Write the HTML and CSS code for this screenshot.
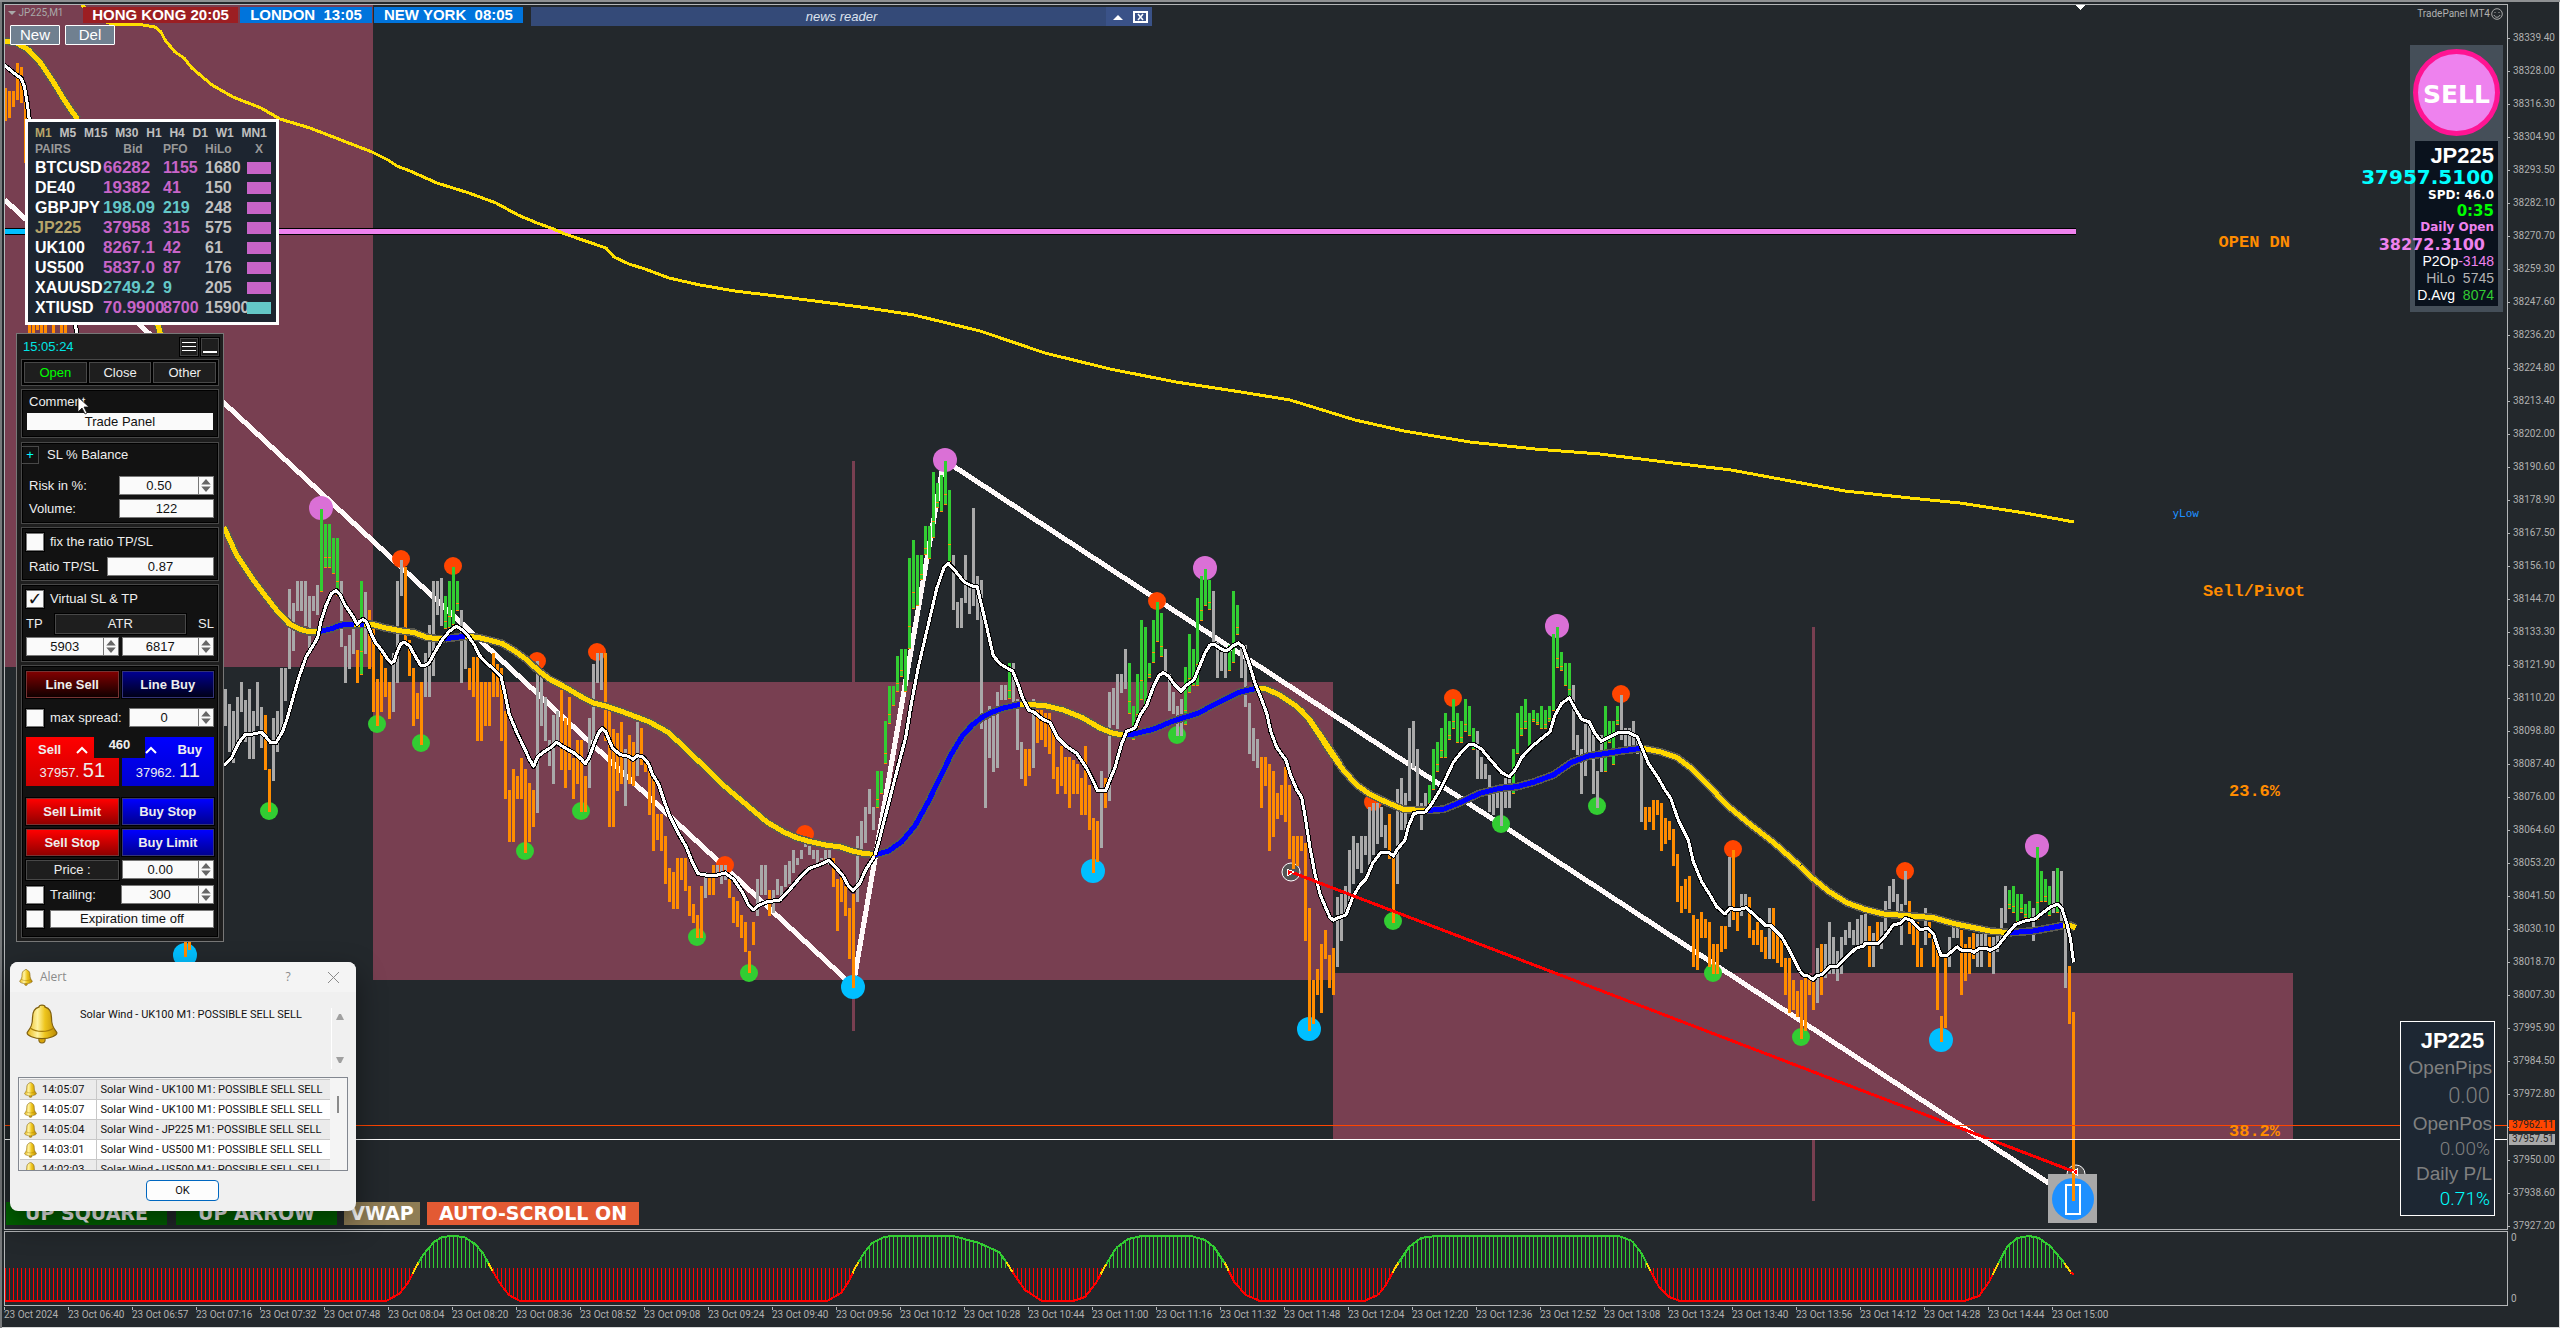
FILE: index.html
```html
<!DOCTYPE html>
<html lang="en">
<head>
<meta charset="utf-8">
<title>JP225,M1</title>
<link rel="stylesheet" href="styles.css">
</head>
<body>
<svg class="defs" aria-hidden="true">
  <defs>
    <linearGradient id="gold" x1="0" x2="1"><stop offset="0" stop-color="#e9b91a"/><stop offset=".35" stop-color="#fff3a0"/><stop offset=".6" stop-color="#eec51c"/><stop offset="1" stop-color="#b98a06"/></linearGradient>
    <symbol id="bell" viewBox="0 0 30 38">
      <circle cx="15" cy="34" r="3" fill="#d9a60c" stroke="#80600e"/>
      <path d="M15 1c2 0 3 1 3 2 4 1 6 5 6 10 0 6 1 9 5 14 1 3-7 6-14 6S0 30 1 27c4-5 5-8 5-14 0-5 2-9 6-10 0-1 1-2 3-2z" fill="url(#gold)" stroke="#80600e" stroke-width="1.2"/>
      <path d="M4 23c6 4 16 4 22 0" fill="none" stroke="#a67c0a"/>
    </symbol>
    <symbol id="spin" viewBox="0 0 14 18"><path d="M2 8l5-6 5 6zM2 10l5 6 5-6z" fill="#666"/></symbol>
  </defs>
</svg>

<main class="terminal">
  <section class="chart" aria-label="Price chart">
    <svg id="price" class="plot" viewBox="5 5 2502 1224" preserveAspectRatio="none"></svg>
  </section>
  <ol class="prices" id="prices"></ol>
  <section class="indicator" aria-label="Trend indicator">
    <svg id="wave" class="plot" viewBox="5 1232 2502 73" preserveAspectRatio="none"></svg>
  </section>
  <div class="zeros"><span>0</span><span>0</span></div>
  <ol class="times" id="times"></ol>
</main>

<span class="tag tag-ask">37962.11</span>
<span class="tag tag-bid">37957.51</span>

<span class="level open-dn">OPEN DN</span>
<span class="level pivot">Sell/Pivot</span>
<span class="level fib-23">23.6%</span>
<span class="level fib-38">38.2%</span>
<span class="ylow">yLow</span>

<header class="topbar">
  <span class="symbol"><svg width="8" height="6" viewBox="0 0 8 6"><path d="M0 1h8l-4 4z" fill="#a9a9a9"/></svg> JP225,M1</span>
  <div class="sessions">
    <span class="session closed">HONG KONG 20:05</span>
    <span class="session">LONDON  13:05</span>
    <span class="session">NEW YORK  08:05</span>
  </div>
  <div class="news"><em>news reader</em>
    <button class="news-btn" aria-label="Collapse"><svg width="12" height="6" viewBox="0 0 12 6"><path d="M1 6l5-5 5 5z" fill="#fff"/></svg></button>
    <button class="news-btn" aria-label="Close"><svg width="15" height="12" viewBox="0 0 15 12"><path d="M1 1h13v10H1z" fill="none" stroke="#fff" stroke-width="2"/><path d="M5 3l5 6M10 3l-5 6" stroke="#fff" stroke-width="1.5"/></svg></button>
  </div>
</header>
<div class="line-tools"><button>New</button><button>Del</button></div>
<div class="expert">TradePanel MT4<svg width="12" height="12" viewBox="0 0 12 12"><circle cx="6" cy="6" r="5.300" fill="none" stroke="#a9a9a9"/><path d="M4 4v1M8 4v1M3 7c1 3 5 3 6 0" fill="none" stroke="#a9a9a9"/></svg></div>

<section class="pairs" aria-label="Pairs">
  <nav class="frames"><button class="on">M1</button><button>M5</button><button>M15</button><button>M30</button><button>H1</button><button>H4</button><button>D1</button><button>W1</button><button>MN1</button></nav>
  <table>
    <thead><tr><th>PAIRS</th><th class="mid">Bid</th><th>PFO</th><th>HiLo</th><th class="mid">X</th></tr></thead>
    <tbody>
      <tr><th>BTCUSD</th><td>66282</td><td>1155</td><td>1680</td><td><i></i></td></tr>
      <tr><th>DE40</th><td>19382</td><td>41</td><td>150</td><td><i></i></td></tr>
      <tr class="up"><th>GBPJPY</th><td>198.09</td><td>219</td><td>248</td><td><i></i></td></tr>
      <tr class="current"><th>JP225</th><td>37958</td><td>315</td><td>575</td><td><i></i></td></tr>
      <tr><th>UK100</th><td>8267.1</td><td>42</td><td>61</td><td><i></i></td></tr>
      <tr><th>US500</th><td>5837.0</td><td>87</td><td>176</td><td><i></i></td></tr>
      <tr class="up"><th>XAUUSD</th><td>2749.2</td><td>9</td><td>205</td><td><i></i></td></tr>
      <tr><th>XTIUSD</th><td>70.9900</td><td>8700</td><td>15900</td><td><i class="teal"></i></td></tr>
    </tbody>
  </table>
</section>

<form class="panel">
  <div class="panel-head"><time>15:05:24</time>
    <button type="button" aria-label="Menu"><svg width="14" height="12" viewBox="0 0 14 12"><path d="M0 1h14v1H0zM0 5h14v1H0zM0 9h14v1H0z" fill="#fff"/></svg></button>
    <button type="button" aria-label="Minimise"><svg width="14" height="12" viewBox="0 0 14 12"><path d="M0 11h14" stroke="#fff" stroke-width="2"/></svg></button>
  </div>
  <div class="group tabs"><button type="button" class="on">Open</button><button type="button">Close</button><button type="button">Other</button></div>
  <div class="group comment"><label for="comment">Comment</label><input id="comment" value="Trade Panel"></div>
  <div class="group balance">
    <div class="line title"><button type="button" class="plus">+</button>SL % Balance</div>
    <div class="line"><label for="risk">Risk in %:</label><span class="spin w95"><input id="risk" value="0.50"><svg><use href="#spin"/></svg></span></div>
    <div class="line"><label for="volume">Volume:</label><span class="spin w95"><input id="volume" value="122"></span></div>
  </div>
  <div class="group ratio">
    <div class="line tick"><input type="checkbox" id="fix"><label for="fix">fix the ratio TP/SL</label></div>
    <div class="line"><label for="ratio">Ratio TP/SL</label><span class="spin w107"><input id="ratio" value="0.87"></span></div>
  </div>
  <div class="group virtual">
    <div class="line tick"><input type="checkbox" id="virt" checked><label for="virt">Virtual SL &amp; TP</label></div>
    <div class="line atr"><label for="tp">TP</label><button type="button" class="dark">ATR</button><label for="sl">SL</label></div>
    <div class="pair"><span class="spin"><input id="tp" value="5903"><svg><use href="#spin"/></svg></span><span class="spin"><input id="sl" value="6817"><svg><use href="#spin"/></svg></span></div>
  </div>
  <div class="group orders">
    <div class="pair"><button type="button" class="btn dsell">Line Sell</button><button type="button" class="btn dbuy">Line Buy</button></div>
    <div class="line tick"><input type="checkbox" id="maxs"><label for="maxs">max spread:</label><span class="spin w85"><input value="0" aria-label="Max spread"><svg><use href="#spin"/></svg></span></div>
    <div class="pair quote">
      <button type="button" class="deal sell"><span class="deal-top"><b>Sell</b><svg width="12" height="8" viewBox="0 0 12 8"><path d="M1 7l5-5 5 5" fill="none" stroke="#fff" stroke-width="2"/></svg></span><span>37957. <big>51</big></span></button>
      <button type="button" class="deal buy"><span class="deal-top"><svg width="12" height="8" viewBox="0 0 12 8"><path d="M1 7l5-5 5 5" fill="none" stroke="#fff" stroke-width="2"/></svg><b>Buy</b></span><span>37962. <big>11</big></span></button>
      <output class="spread">460</output>
    </div>
    <div class="pair"><button type="button" class="btn rsell">Sell Limit</button><button type="button" class="btn rbuy">Buy Stop</button></div>
    <div class="pair"><button type="button" class="btn rsell">Sell Stop</button><button type="button" class="btn rbuy">Buy Limit</button></div>
    <div class="pair"><button type="button" class="dark">Price :</button><span class="spin"><input value="0.00" aria-label="Price"><svg><use href="#spin"/></svg></span></div>
    <div class="line tick"><input type="checkbox" id="trail"><label for="trail">Trailing:</label><span class="spin w93"><input value="300" aria-label="Trailing"><svg><use href="#spin"/></svg></span></div>
    <div class="line tick"><input type="checkbox" aria-label="Expiration"><span class="spin grow"><input value="Expiration time off" aria-label="Expiration time"></span></div>
  </div>
</form>
<svg class="cursor" viewBox="0 0 12 19"><path d="M1 1v15l4-4 3 6 2-1-3-6h5z" fill="#fff" stroke="#111" stroke-width=".8"/></svg>

<div class="scripts"><button class="green">UP SQUARE</button><button class="green">UP ARROW</button><button class="vwap">VWAP</button><button class="auto">AUTO-SCROLL ON</button></div>

<section class="alert" role="dialog" aria-label="Alert">
  <header><svg class="bell-s"><use href="#bell"/></svg><span>Alert</span><button aria-label="Help">?</button><button aria-label="Close"><svg width="11" height="11" viewBox="0 0 11 11"><path d="M0 0l11 11M11 0L0 11" stroke="#8a8a8a"/></svg></button></header>
  <div class="alert-now"><svg class="bell-l"><use href="#bell"/></svg><p>Solar Wind - UK100 M1: POSSIBLE SELL SELL</p>
    <div class="scroll"><svg width="8" height="7" viewBox="0 0 8 7"><path d="M0 7l3-6h2l3 6z" fill="#a0a0a0"/></svg><svg width="8" height="7" viewBox="0 0 8 7"><path d="M0 0l3 6h2l3-6z" fill="#a0a0a0"/></svg></div></div>
  <div class="alert-list">
    <table>
      <tbody>
        <tr><td><svg class="bell-s"><use href="#bell"/></svg>14:05:07</td><td>Solar Wind - UK100 M1: POSSIBLE SELL SELL</td></tr>
        <tr><td><svg class="bell-s"><use href="#bell"/></svg>14:05:07</td><td>Solar Wind - UK100 M1: POSSIBLE SELL SELL</td></tr>
        <tr><td><svg class="bell-s"><use href="#bell"/></svg>14:05:04</td><td>Solar Wind - JP225 M1: POSSIBLE SELL SELL</td></tr>
        <tr><td><svg class="bell-s"><use href="#bell"/></svg>14:03:01</td><td>Solar Wind - US500 M1: POSSIBLE SELL SELL</td></tr>
        <tr><td><svg class="bell-s"><use href="#bell"/></svg>14:02:03</td><td>Solar Wind - US500 M1: POSSIBLE SELL SELL</td></tr>
      </tbody>
    </table>
    <span class="thumb"></span>
  </div>
  <button class="ok">OK</button>
</section>

<aside class="signal">
  <div class="bulb">SELL</div>
  <div class="stats">
    <strong class="name">JP225</strong>
    <span class="bid">37957.5100</span>
    <span class="spd">SPD: 46.0</span>
    <span class="clock">0:35</span>
    <span class="daily">Daily Open</span>
    <span class="daily-val">38272.3100</span>
    <span class="stat">P2Op<b class="pink">-3148</b></span>
    <span class="stat grey">HiLo  <b>5745</b></span>
    <span class="stat">D.Avg  <b class="lime">8074</b></span>
  </div>
</aside>

<aside class="open-box">
  <strong class="name">JP225</strong>
  <span>OpenPips</span><span class="led big">0.00</span>
  <span>OpenPos</span><span class="led">0.00%</span>
  <span>Daily P/L</span><span class="led cyan">0.71%</span>
</aside>
<script src="chart.js"></script>
</body>
</html>
```
FILE: styles.css
```css
* { box-sizing: border-box; }
body { margin: 0; position: relative; min-height: 100vh; background: #23282c; color: #fff; font: 13px/16px "Liberation Sans", Arial, sans-serif; overflow: hidden; }
button, input { font: inherit; color: inherit; margin: 0; padding: 0; border: 0; }
button { background: none; cursor: pointer; white-space: nowrap; }
ol { list-style: none; margin: 0; padding: 0; }
.defs { position: absolute; width: 0; height: 0; }

/* chart frame */
.terminal { display: grid; grid-template-columns: minmax(0, 1fr) 50px; grid-template-rows: minmax(0, 1fr) 75px 20px; row-gap: 1px; height: 100vh; padding: 4px 2px 1px 4px; box-shadow: inset 0 2px #8f9193, inset 2px 0 #77797b, inset -1px -1px #d8d8d8; }
.chart, .indicator { border: 1px solid #b4b6b8; min-height: 0; }
.plot { display: block; width: 100%; height: 100%; shape-rendering: crispEdges; }
.prices, .times, .zeros, .tag { font: 10px/10px Roboto, sans-serif; color: #b0b0b0; }
.prices { padding-top: 17px; overflow: hidden; }
.prices li { height: 33px; line-height: 33px; padding-left: 5px; background: linear-gradient(#b4b6b8, #b4b6b8) 0 17px / 2px 1px no-repeat; }
.times { grid-column: 1 / 3; display: flex; }
.times li { flex: 0 0 64px; padding-top: 3px; background: linear-gradient(#b4b6b8, #b4b6b8) 0 0 / 1px 3px no-repeat; white-space: nowrap; }
.zeros { display: flex; flex-direction: column; justify-content: space-between; padding: 2px 3px; }
.tag { position: absolute; right: 5px; width: 46px; padding-left: 3px; height: 11px; color: #222; }
.tag-ask { top: 1120px; background: #ff4500; }
.tag-bid { top: 1134px; background: #a9a9a9; }

/* labels on the chart */
.level { position: absolute; font: bold 17px/20px "Liberation Mono", monospace; color: #ff8c00; }
.open-dn { top: 233px; right: 270px; }
.pivot { top: 582px; right: 255px; }
.fib-23 { top: 782px; right: 280px; }
.fib-38 { top: 1122px; right: 280px; }
.ylow { position: absolute; top: 506px; right: 361px; font: 11px/16px "DejaVu Sans Mono", monospace; color: #1e90ff; }

/* top strip */
.topbar { position: absolute; left: 8px; top: 7px; display: flex; font-weight: bold; white-space: pre; }
.symbol { width: 75px; font: 10px/12px Roboto, sans-serif; color: #a9a9a9; }
.sessions { display: flex; gap: 2px; font-size: 15px; height: 16px; }
.session { background: #0074dc; width: 149px; text-align: center; }
.session.closed { background: #9c1e22; width: 155px; }
.session:nth-child(2) { width: 132px; }
.news { display: flex; margin-left: 8px; width: 621px; height: 19px; line-height: 19px; background: #344a78; align-items: stretch; }
.news em { flex: 1; text-align: center; font-weight: normal; font-size: 13px; color: #dce2ee; padding-left: 46px; }
.news-btn { width: 23px; background: #3a5288; display: grid; place-items: center; }
.line-tools { position: absolute; left: 10px; top: 25px; display: flex; gap: 5px; }
.line-tools button { width: 50px; height: 20px; background: #708090; border: 1px solid #fff; border-radius: 1px; font-size: 15px; line-height: 18px; }
.expert { position: absolute; right: 57px; top: 8px; display: flex; gap: 1px; font: 10px/12px Roboto, sans-serif; color: #b0b0b0; }

/* pairs table */
.pairs { position: absolute; left: 25px; top: 119px; width: 254px; height: 206px; padding: 3px 7px; border: 3px solid #fff; background: #1d2530; font-family: Impact, "Liberation Sans Narrow", "Liberation Sans", sans-serif; font-weight: bold; }
.frames { display: flex; justify-content: space-between; padding-right: 2px; height: 15px; font-size: 12px; color: #c0c0c0; }
.frames .on { color: #b8a56a; }
.pairs table { border-collapse: collapse; table-layout: fixed; width: 234px; }
.pairs th, .pairs td { padding: 0; height: 20px; text-align: left; white-space: nowrap; font-weight: bold; font-size: 16px; line-height: 20px; width: 42px; color: #c864c8; }
.pairs th:first-child { width: 68px; color: #fff; }
.pairs th:nth-child(2) { width: 60px; }
.pairs td:nth-child(2) { font-size: 17px; }
.pairs th:last-child { width: 24px; }
.pairs thead th, .pairs thead th:first-child { height: 18px; font-size: 12px; color: #999; line-height: 18px; }
.pairs thead .mid { text-align: center; }
.pairs td:nth-child(4) { color: #c0c0c0; }
.pairs .up td:nth-child(2), .pairs .up td:nth-child(3) { color: #64c8c8; }
.pairs .current th:first-child { color: #b8a56a; }
.pairs i { display: block; position: relative; width: 24px; height: 12px; background: #c864c8; }
.pairs i.teal { background: #64c8c8; }

/* trade panel */
.panel { position: absolute; left: 16px; top: 333px; width: 208px; height: 609px; padding: 3px 4px; border: 1px solid #777; background: #1e1e1e; display: flex; flex-direction: column; gap: 3px; color: #eee; }
.panel-head { display: flex; align-items: center; gap: 2px; height: 19px; color: #00e5e5; }
.panel-head time { flex: 1; padding-left: 2px; }
.panel-head button { width: 18px; height: 18px; border: 1px solid #444; outline: 1px solid #000; display: grid; place-items: center; margin-left: 1px; }
.group { border: 1px solid #484848; background: #121212; box-shadow: inset 0 0 0 1px #000; padding: 4px; display: flex; flex-direction: column; gap: 4px; }
.tabs { flex-direction: row; height: 27px; padding: 2px; gap: 2px; background: #000; }
.tabs button { flex: 1; background: #1e1e1e; border: 1px solid #484848; }
.tabs .on { color: #0f0; }
.comment { height: 49px; gap: 3px; }
.comment label { padding-left: 3px; }
.comment input, .spin input { background: #fafafa; color: #111; text-align: center; min-width: 0; }
.comment input { height: 17px; margin: 0 1px; }
.balance { height: 82px; margin-top: 1px; padding-top: 2px; }
.ratio { height: 54px; }
.virtual { height: 78px; }
.line { display: flex; align-items: center; justify-content: space-between; padding-left: 3px; height: 19px; }
.title { justify-content: flex-start; gap: 8px; padding: 0; margin: 0 0 8px -5px; }
.plus { width: 18px; height: 18px; border: 1px solid #484848; color: #0ff; }
.tick { justify-content: flex-start; gap: 6px; padding: 0; }
.tick input[type=checkbox] { appearance: none; width: 18px; height: 18px; background: #fafafa; border: 1px solid #777; outline: 1px solid #000; flex: none; }
.tick input:checked { display: grid; place-items: center; }
.tick input:checked::before { content: "✓"; color: #111; font: bold 18px/16px "DejaVu Sans", sans-serif; }
.spin { display: flex; height: 19px; border: 1px solid #777; background: #fafafa; }
.spin input { flex: 1; width: 10px; background: none; }
.spin svg { width: 15px; height: 17px; border-left: 1px solid #777; flex: none; }
.w95 { width: 95px; }
.w107 { width: 107px; }
.w85 { width: 85px; margin-left: auto; }
.w93 { width: 93px; margin-left: auto; }
.grow { flex: 1; height: 18px; }
.ratio .line + .line, .virtual .line + .line { margin-top: 2px; }
.atr { gap: 12px; padding: 0; }
.dark { flex: 1; height: 20px; background: #1e1e1e; border: 1px solid #484848; outline: 1px solid #000; }
.pair { display: flex; gap: 3px; position: relative; }
.pair > * { flex: 1 1 0; min-width: 0; }
.orders { flex: 1; padding-top: 5px; }
.btn { height: 27px; font-weight: bold; border: 1px solid #334; outline: 1px solid #000; }
.dsell { background: linear-gradient(#800000, #100000); border-color: #733; }
.dbuy { background: linear-gradient(#000090, #000018); border-color: #337; }
.rsell { background: linear-gradient(#ff0000, #900000); border-color: #733; }
.rbuy { background: linear-gradient(#0000ff, #000090); border-color: #337; }
.orders .tick { margin-top: 1px; }
.orders .pair:first-child + .tick { margin-top: 6px; }
.quote { margin: 6px 0 8px; height: 49px; }
.deal { display: flex; flex-direction: column; align-items: center; justify-content: space-between; padding: 5px 4px 2px; }
.deal-top { display: flex; gap: 15px; align-items: center; align-self: flex-start; padding-left: 8px; height: 16px; }
.buy .deal-top { align-self: flex-end; padding: 0 8px 0 0; gap: 20px; }
.deal big { font-size: 20px; }
.deal > span + span { line-height: 24px; }
.sell { background: linear-gradient(#ff0000, #d00000); }
.buy { background: linear-gradient(#0000ff, #0000d0); }
.spread { position: absolute; left: 68px; top: 0; width: 51px; height: 21px; background: #121212; text-align: center; font-weight: bold; }
.cursor { position: absolute; left: 77px; top: 396px; width: 12px; height: 19px; }

/* script buttons */
.scripts { position: absolute; left: 6px; bottom: 103px; display: flex; font: bold 19px/23px "DejaVu Sans", sans-serif; }
.scripts button { height: 23px; }
.green { width: 161px; margin-right: 9px; background: #006400; }
.vwap { width: 76px; background: #8f7d55; margin: 0 7px 0 -2px; }
.auto { width: 212px; background: #e35a33; }

/* alert */
.alert { position: absolute; left: 10px; bottom: 117px; width: 346px; height: 249px; border-radius: 8px; background: #f0f0f0; color: #111; font: 11px/14px Roboto, sans-serif; box-shadow: 0 12px 30px rgba(0, 0, 0, .45); overflow: hidden; display: flex; flex-direction: column; }
.alert header { display: flex; align-items: center; height: 30px; background: #f4f4f4; color: #8a8a8a; font: 12px/16px "Open Sans", sans-serif; padding: 0 4px 0 9px; gap: 7px; }
.alert header span { flex: 1; }
.alert header button { width: 38px; height: 28px; display: grid; place-items: center; }
.bell-s { width: 14px; height: 17px; }
.bell-l { width: 40px; height: 40px; }
.alert-now { display: flex; padding: 12px 8px 0 12px; height: 85px; }
.alert-now p { flex: 1; margin: 4px 0 0 18px; white-space: nowrap; }
.scroll { width: 17px; height: 61px; margin-top: 4px; border-left: 1px solid #fff; display: flex; flex-direction: column; justify-content: space-between; align-items: center; padding: 5px 0; }
.alert-list { position: relative; height: 94px; margin: 0 8px; border: 1px solid #828790; padding: 1px; overflow: hidden; background: #f4f4f4; }
.alert-list table { border-collapse: collapse; width: 310px; }
.alert-list td { height: 20px; padding: 0 4px; border-top: 1px solid #c8c8c8; white-space: nowrap; background: #ebebeb; }
.alert-list tr:nth-child(even) td { background: #fff; }
.alert-list td:first-child { width: 76px; border-right: 1px solid #c8c8c8; }
.alert-list .bell-s { width: 13px; height: 16px; margin-right: 5px; vertical-align: middle; }
.thumb { position: absolute; right: 8px; top: 18px; width: 2px; height: 17px; background: #8a8a8a; }
.ok { width: 73px; height: 21px; margin: 9px auto 0 136px; border: 1px solid #0067c0; border-radius: 4px; background: #fdfdfd; color: #111; }

/* signal */
.signal { position: absolute; right: 57px; top: 45px; width: 93px; height: 267px; padding: 4px 5px 6px; background: #454f59; display: flex; flex-direction: column; align-items: center; gap: 5px; }
.bulb { width: 87px; height: 87px; flex: none; border: 5px solid #ff1493; border-radius: 50%; background: #ee82ee; display: grid; place-items: center; font: bold 25px/28px "DejaVu Sans", sans-serif; padding-top: 4px; }
.stats { width: 83px; height: 165px; background: #0a121d; display: flex; flex-direction: column; align-items: flex-end; padding: 4px 4px 0 0; white-space: nowrap; font: bold 12px/16px "DejaVu Sans", sans-serif; }
.name { font: bold 22px/22px Impact, "Liberation Sans Narrow", "Liberation Sans", sans-serif; }
.bid { font-size: 20px; line-height: 20px; color: #0ff; }
.clock { font-size: 15px; color: #0f0; }
.daily { color: #ee82ee; line-height: 17px; }
.daily-val { font-size: 16px; color: #ee82ee; padding-right: 9px; line-height: 17px; }
.stat { font: 14px/17px "Liberation Sans", sans-serif; white-space: pre; }
.stat b { font-weight: normal; }
.grey { color: #b4b4b4; }
.pink { color: #ee82ee; }
.lime { color: #32cd32; }

/* open positions */
.open-box { position: absolute; right: 65px; bottom: 112px; width: 95px; height: 195px; border: 1px solid #fff; background: #1d2733; display: flex; flex-direction: column; align-items: flex-end; padding: 8px 2px 0 0; color: #808080; font-size: 19px; line-height: 26px; }
.open-box .name { color: #fff; align-self: center; padding-left: 12px; margin-bottom: 3px; }
.led { font: 300 19px/24px Roboto, sans-serif; padding-right: 2px; }
.big { font-size: 22px; line-height: 30px; }
.cyan { color: #0ff; }
```
FILE: chart.js
```js
const NS = 'http://www.w3.org/2000/svg';
const INK = { w: '#a9a9a9', o: '#ff8c00', g: '#32cd32' };
const GOLD = '#ffd700', BLUE = '#0000ff';

// Each zone has its own origin and units per pixel; bars run every 4 px from `first`.
const zones = [
  { x: 0, y: 0, kx: 2.45, ky: 3, first: 4,
    bars: 'o264-362 o273-354 o273-321 o189-300 o200-309 o290-490',
    fast: '10,195 40,225 52,235 60,260 67,310 72,362',
    slow: [[GOLD, '12,123 40,128 70,150 100,190 130,245 160,305 190,358']] },
  { x: 0, y: 320, kx: 3, ky: 3, first: 28,
    bars: 'o5-40 o5-40 o5-30 o5-40 o5-40 w0-0 o5-40 w0-0 o5-40 o5-40',
    fast: '225,5 231,45',
    slow: [[GOLD, '467,-10 482,45']] },
  { x: 0, y: 900, kx: 3, ky: 1, first: 184, bars: 'o38-57 o38-50' },
  { x: 220, y: 440, kx: 2.376, ky: 2.703, first: 224,
    bars: 'w673-773 w714-842 w733-872 w695-823 w654-735 w703-815 w673-862 w733-862 w654-773 w722-832 o743-892 o889-1006 w752-921 w733-843 w616-793 w616-706 w403-618 w441-570 w381-461 w381-461 w381-502 w421-576 w422-461 w392-472 g187-412 g227-345 g227-345 g265-363 g265-422 w381-559 w557-656 w528-618 w500-578 o568-656 g381-636 w411-578 o460-618 o512-735 o646-772 o576-735 o616-696 o655-753 w576-735 w381-656 w324-423 o343-556 o540-637 o616-772 o684-753 o654-824 w576-696 w500-696 w381-637 w381-472 w373-502 g422-510 g381-508 g343-500 g381-461 w460-656 w540-618 o616-675 o587-696 o587-813 o654-813 o654-772 o654-772 o576-696 o606-696 o616-813 o733-970 o946-1086 o889-1086 o908-970 o860-970 o889-1115 o927-1086 o946-1046 w597-1008 w640-772 w695-813 w811-881 w743-930 w733-824 o676-892 o752-940 o695-892 o860-970 o811-930 o811-1006 o908-1006 w752-940 w606-824 w576-656 w576-675 o576-813 o733-1046 o781-1046 o793-949 o762-930 w835-989 o798-930 o817-936 w762-908 o779-879 o860-898 o889-1013 o908-1110 o1011-1081 o1011-1110 o1071-1199 o1157-1249 o1168-1268 o1130-1268 o1130-1189 o1130-1218 o1206-1287 o1254-1306 o1284-1345 o1206-1345 w1168-1238 o1180-1229 o1150-1229 w1150-1170 w1150-1199 w1150-1189 o1180-1238 o1235-1306 o1245-1316 o1284-1345 o1303-1384 o1382-1442 o1303-1365 w1187-1287 w1150-1229 w1150-1229 o1217-1287 w1217-1278 w1187-1229 w1206-1240 w1150-1208 w1138-1200 w1108-1170 w1130-1150 w1108-1132 w1080-1100 w1098-1122 w1108-1132 w1108-1146 w1130-1134 w1108-1132 w1108-1150 o1130-1208 o1187-1327 o1165-1249 o1206-1287 o1265-1403 o1227-1480',
    fast: '9,880 28,858 45,818 60,796 78,795 98,790 110,803 120,818 133,818 148,790 160,752 175,690 188,640 205,585 220,558 232,535 240,490 252,447 265,415 276,407 285,418 298,448 312,470 326,498 332,490 340,485 348,492 358,520 368,545 385,570 400,595 407,603 414,597 420,575 430,550 438,547 450,556 462,580 476,608 485,611 496,603 510,575 528,540 545,517 562,503 575,513 590,530 605,555 617,583 630,600 648,617 668,640 675,675 687,740 705,790 722,830 735,862 745,882 755,856 767,845 785,832 800,817 815,829 840,845 858,862 868,875 877,858 890,818 900,790 908,780 916,788 932,832 950,850 970,855 982,863 992,853 1005,857 1018,875 1028,905 1042,930 1055,975 1070,1020 1090,1065 1108,1100 1122,1140 1136,1172 1155,1176 1175,1178 1200,1170 1220,1187 1240,1220 1255,1255 1267,1270 1280,1258 1300,1248 1330,1244 1355,1213 1380,1180 1400,1158 1425,1148 1447,1136 1465,1158 1480,1178 1493,1205 1504,1218 1520,1198 1535,1160 1555,1125',
    slow: [
      [GOLD, '9,235 40,312 75,372 110,425 140,468 165,497 190,512 210,518 235,518'],
      [BLUE, '235,518 265,510 285,501 300,499 318,499'],
      [GOLD, '318,499 332,499'], [BLUE, '332,499 342,498'],
      [GOLD, '342,498 360,498 390,507 430,516 460,520 490,533 515,537 535,537'],
      [BLUE, '535,537 555,534 582,531'],
      [GOLD, '582,531 610,533 640,541 670,550 700,570 730,595 755,622 785,648 820,668 860,695 885,710 920,720 970,740 1020,762 1065,790 1110,838 1160,893 1200,937 1250,985 1300,1033 1340,1060 1370,1075 1400,1085 1440,1095 1475,1100 1500,1110 1530,1118 1558,1120']] },
  { x: 840, y: 430, kx: 3, ky: 2.489, first: 856,
    bars: 'w1010-1175 w973-1042 w938-1029 w894-957 w938-995 g849-940 g849-905 g724-832 g636-733 g636-688 g562-653 g545-616 g545-653 g319-546 g274-446 g311-437 g311-374 g239-312 g239-320 g105-268 g132-195 g113-205 g77-186 g149-328 w311-448 w428-493 w418-493 w311-431 w385-458 w194-438 w363-474 w373-744 w720-941 w687-816 w700-851 w652-841 w635-672 w635-672 g580-670 w580-680 w670-796 w777-869 o794-886 o794-861 w670-841 o697-779 o697-771 o704-790 o704-806 o740-869 o839-906 o786-886 o814-906 o814-941 o821-906 o831-906 o866-958 o786-958 o884-996 o966-1103 o973-1076 w849-1040 o866-941 w652-923 w642-734 w607-744 w607-655 w545-645 g580-706 g687-771 g607-740 g473-672 g490-698 g580-617 g473-581 g428-527 g455-565 w545-607 w607-699 w652-708 w687-762 w670-762 g590-734 g508-655 g545-637 g418-637 g363-475 g346-438 g373-448 w401-527 w527-617 w545-600 w545-617 g535-600 g401-581 g436-510 w535-617 w535-689 w680-806 w742-824 w769-841 o814-941 o814-886 o831-1048 o849-1014 o903-968 o884-958 o839-976 o884-1068 o1010-1093 o1010-1085 o1010-1048 o1028-1272 o1190-1497 o1369-1478 o1342-1406 o1279-1451 o1244-1317 o1307-1389 o1289-1406',
    fast: '105,1058 118,1020 150,915 175,835 197,765 212,690 235,590 262,495 290,395 312,342 325,332 345,350 372,378 395,388 412,390 420,420 440,490 460,562 480,582 500,592 518,600 535,635 548,668 567,698 580,701 605,718 630,728 652,765 680,788 710,805 740,842 760,875 773,898 797,898 810,870 825,840 845,780 860,750 885,742 900,710 920,685 940,640 958,610 970,604 985,612 1005,635 1023,650 1040,635 1062,622 1078,590 1095,555 1110,535 1125,535 1145,546 1160,550 1180,537 1195,530 1210,540 1225,575 1245,630 1262,665 1280,705 1292,750 1310,790 1338,822 1352,860 1370,895 1385,915 1395,960 1410,1040 1425,1105 1440,1155 1455,1185 1470,1213 1480,1220 1497,1212',
    slow: [
      [BLUE, '105,1057 145,1048 185,1025 225,985 265,925 300,865 335,805 370,758 400,732 425,716 455,703 490,692 540,683'],
      [GOLD, '540,683 570,683 620,687 670,697 730,717 780,742 820,755 855,760'],
      [BLUE, '855,760 880,757 940,745 1000,724 1075,705 1130,680 1200,652 1250,643'],
      [GOLD, '1250,643 1280,645 1320,660 1365,685 1410,722 1450,770 1500,832']] },
  { x: 1300, y: 560, kx: 3, ky: 3, first: 1336,
    bars: 'w1011-1221 w1002-1143 w978-1070 w870-1026 w828-971 w849-927 w828-939 w828-885 w741-916 w729-885 w729-852 w741-831 w795-864 o762-897 o885-1089 w687-972 w654-810 w699-810 w504-723 w483-624 w567-745 w729-810 w699-758 g675-748 g567-690 g546-635 g504-593 g459-593 g483-539 g417-506 g459-548 g483-548 g417-515 g438-527 g504-570 w513-657 w591-657 w612-657 w645-756 w690-765 w700-744 w690-798 w654-744 w654-744 g567-701 g459-581 g438-527 g417-506 g459-560 g450-485 g459-494 g438-506 g450-506 g438-485 g222-452 g201-323 g276-332 g309-377 g309-415 w375-570 w525-585 w567-702 w492-648 w483-580 w525-702 w633-744 w525-636 g438-635 g483-548 g483-614 g438-494 w405-540 w504-558 w504-558 w483-558 w525-582 w555-786 o741-810 o741-786 o720-810 o720-765 o729-873 o774-852 o783-840 o807-918 o882-1026 o978-1059 o957-1047 o948-1059 o1065-1221 o1077-1230 o1056-1134 o1077-1134 o1086-1221 o1152-1242 o1152-1242 o1098-1176 o1098-1167 w891-1101 o870-1080 o1045-1113 w1002-1068 w1002-1045 o1011-1134 o1110-1155 o1086-1155 o1110-1176 o1131-1197 w1044-1197 o1044-1197 o1120-1209 o1131-1221 o1194-1305 o1194-1359 o1260-1350 o1293-1371',
    fast: '92,1074 101,1080 115,1073 138,1065 158,1012 180,975 198,957 218,910 243,877 266,877 280,888 292,868 315,840 325,800 342,760 376,756 393,735 420,690 440,650 460,607 485,575 505,555 520,552 545,568 570,598 605,638 628,650 645,630 665,592 695,560 725,535 750,515 765,465 785,430 808,414 825,445 845,478 868,486 885,520 904,544 920,535 940,525 960,516 985,517 1012,530 1025,562 1045,610 1075,655 1095,690 1112,715 1135,780 1165,840 1180,905 1205,965 1230,1005 1250,1040 1275,1062 1290,1045 1312,1050 1338,1043 1360,1062 1380,1080 1397,1097 1410,1095 1445,1130 1465,1165 1485,1205 1500,1233',
    slow: [
      [GOLD, '0,448 25,475 55,520 90,575 130,630 170,675 210,703 260,727 310,748 345,750 385,751'],
      [BLUE, '385,751 430,748 475,730 540,700 600,685 650,680 700,667 760,645 815,607 865,588 920,580 970,572 1025,565'],
      [GOLD, '1025,565 1080,575 1130,592 1170,622 1220,670 1280,735 1350,793 1420,847 1500,918']] },
  { x: 1740, y: 600, kx: 2.8, ky: 2.45, first: 1800,
    bars: 'o931-1076 o925-1055 o931-968 o925-1004 w853-987 o843-968 w843-925 w789-916 w826-916 w860-933 w826-916 w808-845 w789-828 w808-845 w782-855 w772-850 w769-838 o799-899 w816-899 o789-845 w789-855 w737-810 w701-757 w684-740 w720-772 w745-845 w665-747 o737-818 o780-845 o790-899 o853-899 w755-845 o790-828 o810-899 o853-1004 o1019-1083 o877-1048 w826-899 w799-828 w799-828 o808-968 o843-933 o826-916 o816-880 w818-899 w818-899 w818-860 o826-899 w826-916 w818-862 w755-838 w701-791 g710-757 g701-767 g720-790 g720-767 g745-780 g737-782 w755-835 g605-784 g665-740 g684-740 g701-774 w665-767 g657-767 w665-786 w780-951 o897-1039 o1009-1472',
    fast: '168,910 178,919 190,921 205,930 215,920 230,918 252,898 272,898 300,873 325,853 345,848 352,841 388,841 405,825 430,795 448,793 463,780 480,785 505,808 525,804 542,818 552,845 563,871 578,872 608,850 620,858 645,858 655,863 668,855 690,853 700,858 720,850 745,822 770,796 795,787 825,782 850,765 870,752 890,745 902,757 915,792 925,830 934,888',
    slow: [
      [GOLD, '168,652 205,683 250,715 300,742 350,758 400,769 460,773 540,778 600,793 650,802 700,811 755,815'],
      [BLUE, '755,815 820,811 870,803 905,797'],
      [GOLD, '905,797 925,797 940,803']] },
];

const daily = '82,5 84,7 100,20 112,24 122,24 143,25 155,27 161,32 165,40 175,52 184,58 192,68 212,85 233,97 261,108 280,119 310,128 341,140 372,152 388,160 397,166 410,171 437,183 469,193 496,203 518,215 537,223 551,228 565,234 606,248 614,257 629,264 645,269 669,278 700,285 735,291 784,297 830,303 868,308 914,315 980,331 1045,353 1110,369 1176,382 1241,392 1290,400 1355,420 1404,431 1470,442 1535,449 1600,454 1665,462 1731,470 1796,482 1845,491 1910,498 1960,503 2025,513 2074,522';

const pivots = {
  '#da70d6': [12, '321,508 945,460 1205,568 1557,626 2037,846'],
  '#ff4500': [9, '401,559 453,566 537,661 597,652 725,865 805,834 1157,601 1373,802 1453,698 1621,694 1733,849 1905,871'],
  '#32cd32': [9, '269,811 377,724 421,743 525,851 581,811 697,937 749,973 1177,735 1393,921 1501,824 1597,806 1713,973 1801,1037'],
  '#00bfff': [12, '853,987 1093,871 1309,1029 1941,1040 185,955'],
};

const wave = '5,1301 386,1301 399,1294 408,1283 416,1267 423,1255 434,1242 442,1237 453,1236 464,1237 475,1244 483,1253 492,1270 501,1285 509,1295 520,1301 827,1301 841,1293 848,1283 855,1268 864,1253 872,1243 884,1237 893,1236 953,1236 961,1238 979,1243 999,1252 1007,1263 1013,1273 1025,1290 1042,1301 1073,1301 1085,1297 1096,1283 1104,1268 1116,1248 1128,1239 1142,1236 1191,1236 1205,1240 1214,1247 1226,1265 1234,1282 1246,1295 1260,1301 1364,1301 1378,1295 1386,1285 1395,1268 1409,1247 1421,1238 1435,1236 1619,1236 1632,1241 1642,1254 1650,1270 1659,1287 1669,1297 1680,1301 1964,1301 1979,1296 1989,1282 1997,1266 2007,1247 2017,1238 2029,1236 2039,1238 2050,1246 2062,1260 2072,1274';

const scale = ['38339.40', '38328.00', '38316.30', '38304.90', '38293.50', '38282.10', '38270.70', '38259.30', '38247.60', '38236.20', '38224.80', '38213.40', '38202.00', '38190.60', '38178.90', '38167.50', '38156.10', '38144.70', '38133.30', '38121.90', '38110.20', '38098.80', '38087.40', '38076.00', '38064.60', '38053.20', '38041.50', '38030.10', '38018.70', '38007.30', '37995.90', '37984.50', '37972.80', '', '37950.00', '37938.60', '37927.20'];

function draw(parent, name, attrs) {
  const node = document.createElementNS(NS, name);
  for (const key in attrs) node.setAttribute(key, attrs[key]);
  parent.append(node);
  return node;
}
const pairs = text => text.split(' ').map(p => p.split(',').map(Number));
const place = (zone, text) => pairs(text).map(([x, y]) => [zone.x + x / zone.kx, zone.y + y / zone.ky]);
const toPath = points => 'M' + points.map(p => p.map(v => Math.round(v * 10) / 10).join(' ')).join('L');
const line = (svg, points, stroke, width, cap = 'butt') =>
  draw(svg, 'path', { d: toPath(points), fill: 'none', stroke, 'stroke-width': width, 'stroke-linejoin': 'round', 'stroke-linecap': cap });
const rect = (svg, x, y, width, height, fill) => draw(svg, 'rect', { x, y, width, height, fill });

const price = document.getElementById('price');

// session boxes
for (const [x, y, w, h] of [[5, 5, 368, 662], [373, 682, 960, 298], [1333, 973, 960, 166], [852, 461, 3, 570], [1812, 627, 3, 346], [1812, 1139, 3, 62]]) {
  rect(price, x, y, w, h, '#783f51');
}
// daily open, zigzag
rect(price, 5, 228, 2071, 7, '#000');
rect(price, 5, 229, 60, 5, '#00bfff');
rect(price, 65, 229, 2011, 5, '#ee82ee');
line(price, pairs('5,200 853,986 944,460 2073,1199'), '#fffafa', 5);
line(price, pairs(daily), '#ffe000', 3);
rect(price, 2048, 1174, 49, 49, '#a9a9a9');
draw(price, 'circle', { cx: 2073, cy: 1199, r: 21, fill: '#1e90ff', 'shape-rendering': 'auto' });
draw(price, 'rect', { x: 2066, y: 1185, width: 14, height: 29, fill: 'none', stroke: '#fff', 'stroke-width': 2 });
for (const color in pivots) {
  for (const [cx, cy] of pairs(pivots[color][1])) {
    draw(price, 'circle', { cx, cy, r: pivots[color][0], fill: color, 'shape-rendering': 'auto' });
  }
}
for (const [cx, cy] of [[1291, 872], [2076, 1171]]) {
  draw(price, 'path', { d: cx < 2000 ? `M${cx - 9} ${cy}a9 9 0 1 1 18 0a9 9 0 1 1-18 0` : `M${cx - 9} ${cy + 3}a9 9 0 1 1 18 0`, fill: '#555', stroke: '#fff', 'shape-rendering': 'auto' });
}

// price bars
for (const zone of zones) {
  zone.bars.split(' ').forEach((bar, i) => {
    const [high, low] = bar.slice(1).split('-').map(v => Math.round(zone.y + v / zone.ky));
    const x = zone.first + 4 * i;
    rect(price, x, high, 3, low - high, INK[bar[0]]);
    if (bar[0] === 'g') {
      rect(price, x, low - 1, 3, 1, INK.o);
      if (i % 3) rect(price, x, low - Math.round((low - high) / 4), 3, 1, INK.o);
    }
  });
}
// moving averages
for (const zone of zones) {
  for (const part of zone.slow || []) line(price, place(zone, part[1]), '#5a5a50', 8);
}
for (const zone of zones) {
  for (const part of zone.slow || []) line(price, place(zone, part[1]), part[0], 5);
}
for (const zone of zones) if (zone.fast) line(price, place(zone, zone.fast), '#000', 5);
for (const zone of zones) if (zone.fast) line(price, place(zone, zone.fast), '#fff', 3);

// open position and quotes
line(price, pairs('1291,872 2075,1172'), '#f00', 3);
draw(price, 'path', { d: 'M1287 869l7 3-7 4z', fill: '#f00', stroke: '#fff' });
draw(price, 'path', { d: 'M2077 1169l-5 3 5 3z', fill: '#f00', stroke: '#fff' });
rect(price, 5, 1125, 2502, 1, '#ff4500');
rect(price, 5, 1139, 2502, 1, '#fff');
draw(price, 'path', { d: 'M2075 5h10l-5 5z', fill: '#fff' });

// indicator
const pane = document.getElementById('wave');
const curve = pairs(wave);
const level = x => {
  const i = curve.findIndex(p => p[0] >= x);
  if (i === 0) return curve[0][1];
  if (i < 0) return curve[curve.length - 1][1];
  const [a, b] = [curve[i - 1], curve[i]];
  return a[1] + (b[1] - a[1]) * (x - a[0]) / (b[0] - a[0]);
};
const tone = y => (y < 1263 ? '#32cd32' : y < 1273 ? '#ffd700' : '#f00');
for (let x = 5; x < 2072; x += 4) {
  const y = Math.round(level(x));
  if (Math.abs(y - 1268) > 3) rect(pane, x, Math.min(y, 1268), 1, Math.abs(y - 1268), y < 1268 ? '#32cd32' : '#f00');
}
for (let x = 5; x < 2072; x += 2) {
  const a = level(x), b = level(x + 2);
  line(pane, [[x, a], [x + 2, b]], tone((a + b) / 2), 2, 'square');
}

// axes
for (const value of scale) {
  const item = document.createElement('li');
  item.textContent = value;
  document.getElementById('prices').append(item);
}
const early = ['2024', '06:40', '06:57', '07:16', '07:32'];
for (let i = 0; i < 33; i++) {
  const minutes = 388 + 16 * i;
  const clock = String(Math.floor(minutes / 60)).padStart(2, '0') + ':' + String(minutes % 60).padStart(2, '0');
  const item = document.createElement('li');
  item.textContent = '23 Oct ' + (early[i] || clock);
  document.getElementById('times').append(item);
}
```
